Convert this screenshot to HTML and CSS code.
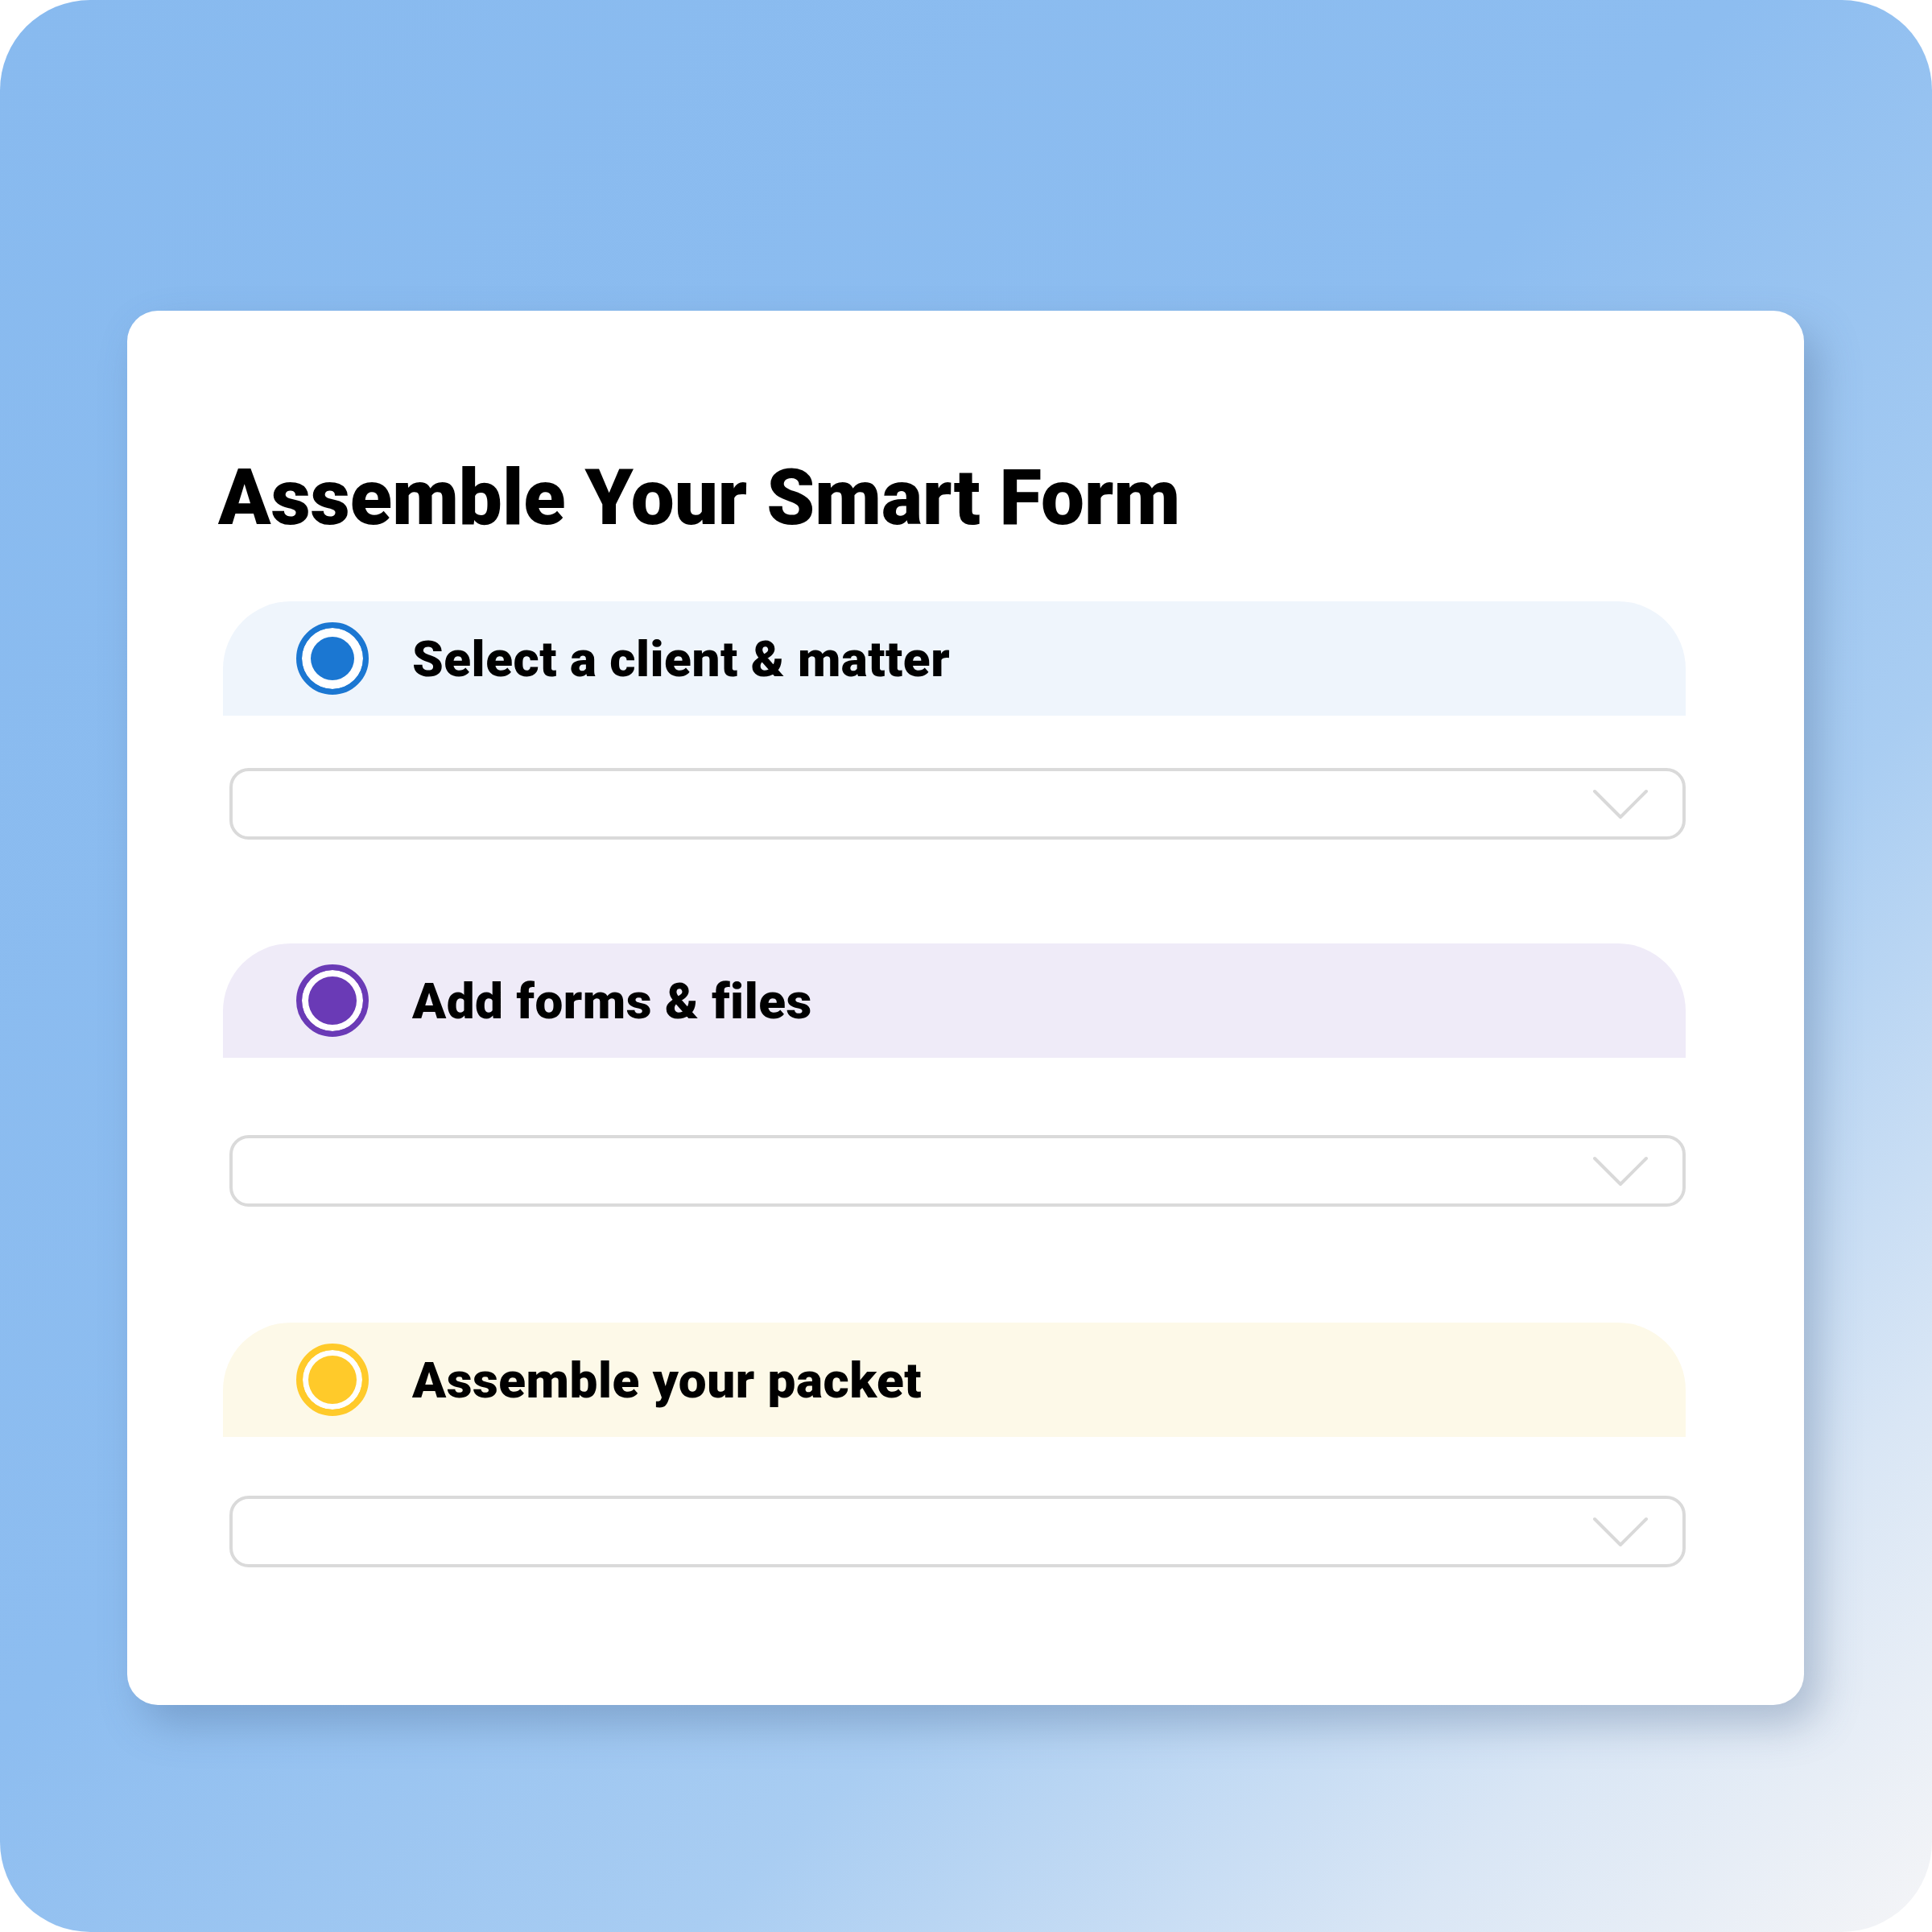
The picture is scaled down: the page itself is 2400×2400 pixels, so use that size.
FILE: index.html
```html
<!DOCTYPE html>
<html lang="en">
<head>
<meta charset="UTF-8">
<meta name="viewport" content="width=device-width, initial-scale=1.0">
<title>Assemble Your Smart Form</title>
<link rel="stylesheet" href="styles.css">
</head>
<body>
<div class="frame">
  <div class="card">
    <h1 class="title">Assemble Your Smart Form</h1>

    <div class="step step-blue">
      <span class="radio"></span>
      <span class="step-label">Select a client &amp; matter</span>
    </div>
    <div class="select select-first">
      <svg class="chevron" width="70" height="38" viewBox="0 0 70 38"><polyline points="3,3 35,35 67,3" /></svg>
    </div>

    <div class="step step-purple">
      <span class="radio"></span>
      <span class="step-label">Add forms &amp; files</span>
    </div>
    <div class="select select-second">
      <svg class="chevron" width="70" height="38" viewBox="0 0 70 38"><polyline points="3,3 35,35 67,3" /></svg>
    </div>

    <div class="step step-yellow">
      <span class="radio"></span>
      <span class="step-label">Assemble your packet</span>
    </div>
    <div class="select select-third">
      <svg class="chevron" width="70" height="38" viewBox="0 0 70 38"><polyline points="3,3 35,35 67,3" /></svg>
    </div>
  </div>
</div>
</body>
</html>
```

FILE: styles.css
```css
body {
  margin: 0;
  background: #fff;
  font-family: Roboto, "Noto Sans", sans-serif;
  color: #000;
}
.frame {
  width: 2400px;
  height: 2400px;
  border-radius: 112px;
  overflow: hidden;
  background: linear-gradient(135deg, #88baef 0%, #8dbdf0 45%, #a9cdf2 68%, #d9e6f5 86%, #f5f5f7 100%);
  padding-top: 386px;
  box-sizing: border-box;
}
.card {
  margin-left: 158px;
  width: 2083px;
  height: 1732px;
  box-sizing: border-box;
  padding: 0 147px 0 119px;
  background: #fff;
  border-radius: 38px;
  box-shadow: 18px 24px 50px rgba(70, 100, 140, 0.34);
  display: flex;
  flex-direction: column;
}
.title {
  margin: 184px 0 0 -6px;
  font-size: 96px;
  font-weight: 900;
  line-height: 1;
  letter-spacing: 0;
}
.step {
  height: 142px;
  border-radius: 84px 84px 0 0;
  display: flex;
  align-items: center;
  padding-left: 91px;
  gap: 54px;
}
.step-blue { margin-top: 81px; background: #eff5fc; }
.step-purple { margin-top: 129px; background: #efebf8; }
.step-yellow { margin-top: 144px; background: #fdf9e8; }
.radio {
  width: 90px;
  height: 90px;
  box-sizing: border-box;
  border-radius: 50%;
  border: 7px solid;
}
.step-blue .radio { border-color: #1b77d2; background: #1b77d2; box-shadow: inset 0 0 0 11px #fff; }
.step-purple .radio { border-color: #6a3ab6; background: #6a3ab6; box-shadow: inset 0 0 0 8px #fff; }
.step-yellow .radio { border: 8px solid #ffca2a; background: #ffca2a; box-shadow: inset 0 0 0 7px #fff; }
.step-label {
  font-size: 62px;
  font-weight: 900;
  letter-spacing: 0.5px;
}
.select {
  margin-left: 8px;
  height: 89px;
  box-sizing: border-box;
  border: 4px solid #dadada;
  border-radius: 24px;
  display: flex;
  align-items: center;
  justify-content: flex-end;
  padding-right: 42px;
}
.select-first { margin-top: 65px; }
.select-second { margin-top: 96px; }
.select-third { margin-top: 73px; }
.chevron polyline {
  fill: none;
  stroke: #d9d9d9;
  stroke-width: 4;
  stroke-linecap: round;
  stroke-linejoin: round;
}
```
